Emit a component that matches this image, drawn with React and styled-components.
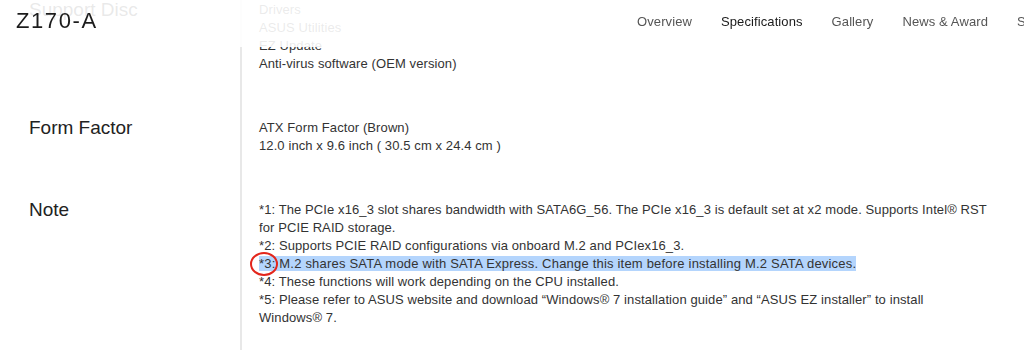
import styled, { createGlobalStyle } from "styled-components"

const GlobalStyle = createGlobalStyle`
  html, body {
    margin: 0;
    padding: 0;
    background: #fff;
    overflow: hidden;
  }
  body {
    font-family: "Liberation Sans", Arial, sans-serif;
    color: #333;
  }
`

const Header = styled.header`
  position: fixed;
  top: 0;
  left: 0;
  right: 0;
  height: 47px;
  display: flex;
  align-items: center;
  padding-left: 16px;
  background: rgba(255, 255, 255, 0.9);
  overflow: hidden;
  z-index: 10;
`

const Title = styled.h1`
  flex: 0 0 621px;
  margin: 0;
  padding-bottom: 5px;
  font-size: 22px;
  font-weight: 400;
  letter-spacing: 1.6px;
  color: #1c1c1c;
`

const Nav = styled.nav`
  display: flex;
  flex-shrink: 0;
  gap: 29px;
  padding-bottom: 5px;
`

const NavItem = styled.a`
  font-size: 13px;
  letter-spacing: 0.1px;
  color: ${({ $active }) => ($active ? "#1a1a1a" : "#555")};
  white-space: nowrap;
  text-decoration: none;
  cursor: pointer;
`

const Specs = styled.div`
  margin-top: -22px;
`

const Row = styled.div`
  display: grid;
  grid-template-columns: 242px 746px;
`

const Label = styled.div`
  padding: 23px 0 23px 29px;
  border-right: 2px solid #e8e8e8;
  font-size: 19px;
  line-height: 18px;
  color: #222;
`

const Value = styled.div`
  padding: 23px 0 23px 17px;
  font-size: 13px;
  line-height: 18px;
  letter-spacing: 0.1px;
  color: #333;
`

const Line = styled.div``

const Selected = styled.span`
  background: #b4d5fd;
  letter-spacing: 0.2px;
`

const Marked = styled.span`
  position: relative;

  &::after {
    content: "";
    position: absolute;
    left: -9px;
    top: 50%;
    width: 24px;
    height: 20px;
    transform: translateY(-50%);
    border: 2px solid #e3261c;
    border-radius: 50%;
  }
`

const specs = [
  {
    label: "Support Disc",
    lines: ["Drivers", "ASUS Utilities", "EZ Update", "Anti-virus software (OEM version)"],
  },
  {
    label: "Form Factor",
    lines: ["ATX Form Factor (Brown)", "12.0 inch x 9.6 inch ( 30.5 cm x 24.4 cm )"],
  },
]

const navItems = ["Overview", "Specifications", "Gallery", "News & Award", "Support"]

export default function App() {
  return (
    <>
      <GlobalStyle />
      <Header>
        <Title>Z170-A</Title>
        <Nav>
          {navItems.map((item) => (
            <NavItem key={item} $active={item === "Specifications"}>
              {item}
            </NavItem>
          ))}
        </Nav>
      </Header>

      <Specs>
        {specs.map((spec) => (
          <Row key={spec.label}>
            <Label>{spec.label}</Label>
            <Value>
              {spec.lines.map((line) => (
                <Line key={line}>{line}</Line>
              ))}
            </Value>
          </Row>
        ))}

        <Row>
          <Label>Note</Label>
          <Value>
            <Line>
              *1: The PCIe x16_3 slot shares bandwidth with SATA6G_56. The PCIe x16_3 is default set at x2 mode. Supports Intel® RST for PCIE RAID storage.
            </Line>
            <Line>*2: Supports PCIE RAID configurations via onboard M.2 and PCIex16_3.</Line>
            <Line>
              <Selected>
                <Marked>*3:</Marked> M.2 shares SATA mode with SATA Express. Change this item before installing M.2 SATA devices.
              </Selected>
            </Line>
            <Line>*4: These functions will work depending on the CPU installed.</Line>
            <Line>
              *5: Please refer to ASUS website and download “Windows® 7 installation guide” and “ASUS EZ installer” to install Windows® 7.
            </Line>
          </Value>
        </Row>
      </Specs>
    </>
  )
}
